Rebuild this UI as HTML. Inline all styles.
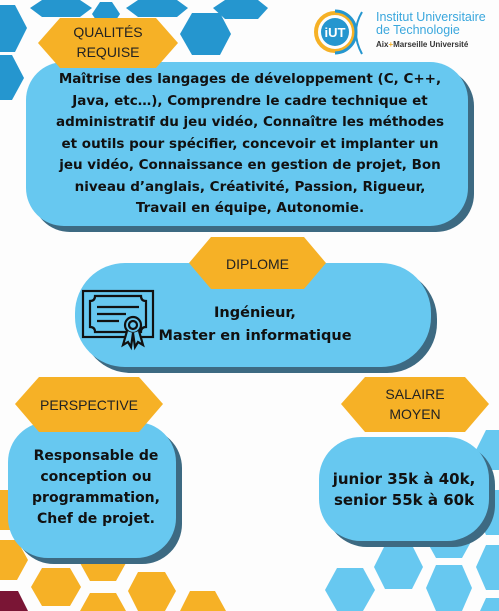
<!DOCTYPE html>
<html><head><meta charset="utf-8"><style>
*{margin:0;padding:0;box-sizing:border-box}
body{width:499px;height:611px;overflow:hidden;background:#fdfdfd;position:relative;font-family:"Liberation Sans",sans-serif}
.abs{position:absolute}
.box{position:absolute;background:#67c8f0;box-shadow:6px 6px 0 #3d6a82}
.t{position:absolute;font-family:"DejaVu Sans",sans-serif;font-weight:bold;color:#111;text-align:center;font-size:13.5px;line-height:21.5px;white-space:nowrap}
.lbl{position:absolute;color:#222;text-align:center;font-size:14px;line-height:20px}
</style></head><body>
<svg class="abs" style="left:0;top:0" width="499" height="611">
<g fill="#2596cf">
<polygon points="42,0 80,0 92,8 80,17 42,17 30,8"/>
<polygon points="138,0 177,0 188,8 177,17 138,17 126,8"/>
<polygon points="225,0 258,0 268,8 258,19 225,19 213,8"/>
<polygon points="192,13 220,13 231,34 220,55 192,55 180,34"/>
<polygon points="0,5 15,5 27,28 15,52 0,52"/>
<polygon points="0,55 12,55 24,78 12,100 0,100"/>
<polygon points="100,2 112,2 120,14 112,26 100,26 92,14"/>
</g>
<g fill="#f6b126">
<polygon points="0,490 15,490 25,510 15,530 0,530"/>
<polygon points="0,540 17,540 28,560 17,580 0,580"/>
<polygon points="42,568 70,568 81,587 70,606 42,606 31,587"/>
<polygon points="90,545 116,545 126,563 116,581 90,581 80,563"/>
<polygon points="138,572 165,572 176,591 165,611 138,611 128,591"/>
<polygon points="90,593 116,593 126,611 80,611"/>
<polygon points="190,591 215,591 226,611 180,611"/>
</g>
<polygon fill="#7a1535" points="0,591 18,591 28,611 0,611"/>
<g fill="#67c8f0">
<polygon points="337,568 363,568 375,590 363,611 337,611 325,590"/>
<polygon points="385,545 412,545 423,567 412,589 385,589 374,567"/>
<polygon points="436,565 462,565 472,588 462,611 436,611 426,588"/>
<polygon points="436,522 462,522 472,540 462,558 436,558 426,540"/>
<polygon points="486,430 499,430 499,470 486,470 476,450"/>
<polygon points="486,490 499,490 499,535 486,535 476,512"/>
<polygon points="486,545 499,545 499,590 486,590 476,567"/>
<polygon points="486,598 499,598 499,611 480,611"/>
</g>
</svg>

<svg class="abs" style="left:310px;top:8px" width="60" height="50">
<circle cx="25" cy="24" r="19" fill="none" stroke="#f6b126" stroke-width="4"/>
<path d="M25 3 A21 21 0 0 1 25 45" fill="none" stroke="#2596cf" stroke-width="3"/>
<circle cx="25" cy="24" r="14" fill="#2596cf"/>
<text x="25" y="29" font-family="Liberation Sans" font-weight="bold" font-size="13" fill="#fff" text-anchor="middle">iUT</text>
<path d="M52 4 Q40 24 52 46" fill="none" stroke="#2596cf" stroke-width="2"/>
</svg>
<div class="abs" style="left:376px;top:11px;color:#3aa7dd;font-size:12.5px;line-height:13px">Institut Universitaire<br>de Technologie</div>
<div class="abs" style="left:376px;top:40px;color:#333;font-size:8px;font-weight:bold">Aix<span style="color:#f6b126">+</span>Marseille Université</div>

<div class="box" style="left:26px;top:62px;width:442px;height:164px;border-radius:38px"></div>
<svg class="abs" style="left:38px;top:18px" width="140" height="50"><polygon fill="#f6b126" points="22,0 118,0 140,25 118,50 22,50 0,25"/></svg>
<div class="lbl" style="left:38px;top:22px;width:140px">QUALITÉS<br>REQUISE</div>
<div class="t" style="left:26px;top:69px;width:448px">Maîtrise des langages de développement (C, C++,<br>Java, etc…), Comprendre le cadre technique et<br>administratif du jeu vidéo, Connaître les méthodes<br>et outils pour spécifier, concevoir et implanter un<br>jeu vidéo, Connaissance en gestion de projet, Bon<br>niveau d’anglais, Créativité, Passion, Rigueur,<br>Travail en équipe, Autonomie.</div>

<div class="box" style="left:75px;top:263px;width:356px;height:104px;border-radius:50px"></div>
<svg class="abs" style="left:189px;top:237px" width="137" height="52"><polygon fill="#f6b126" points="22,0 115,0 137,26 115,52 22,52 0,26"/></svg>
<div class="lbl" style="left:189px;top:254px;width:137px">DIPLOME</div>
<svg class="abs" style="left:81px;top:289px" width="76" height="62" fill="none" stroke="#111" stroke-width="2.2">
<rect x="2" y="2" width="70" height="46"/>
<path d="M9 12 Q14 12 14 7 L60 7 Q60 12 65 12 L65 38 Q60 38 60 43 L14 43 Q14 38 9 38 Z"/>
<path d="M16 18 H58 M16 25 H45 M16 32 H38"/>
<circle cx="52" cy="36" r="8" fill="#67c8f0"/><circle cx="52" cy="36" r="4"/>
<path d="M46 42 L42 56 L47 53 L50 58 L52 44 M58 42 L62 56 L57 53 L54 58 L52 44" fill="#67c8f0"/>
</svg>
<div class="t" style="left:150px;top:302px;width:210px;line-height:23px;font-size:14.5px">Ingénieur,<br>Master en informatique</div>

<div class="box" style="left:8px;top:422px;width:168px;height:136px;border-radius:40px"></div>
<svg class="abs" style="left:15px;top:377px" width="148" height="55"><polygon fill="#f6b126" points="24,0 124,0 148,27 124,55 24,55 0,27"/></svg>
<div class="lbl" style="left:15px;top:395px;width:148px">PERSPECTIVE</div>
<div class="t" style="left:8px;top:446px;width:176px;line-height:21px;font-size:14px">Responsable de<br>conception ou<br>programmation,<br>Chef de projet.</div>

<div class="box" style="left:319px;top:437px;width:170px;height:104px;border-radius:42px"></div>
<svg class="abs" style="left:341px;top:377px" width="148" height="55"><polygon fill="#f6b126" points="24,0 124,0 148,27 124,55 24,55 0,27"/></svg>
<div class="lbl" style="left:341px;top:384px;width:148px">SALAIRE<br>MOYEN</div>
<div class="t" style="left:319px;top:469px;width:170px;font-size:15px;line-height:21px">junior 35k à 40k,<br>senior 55k à 60k</div>
</body></html>
